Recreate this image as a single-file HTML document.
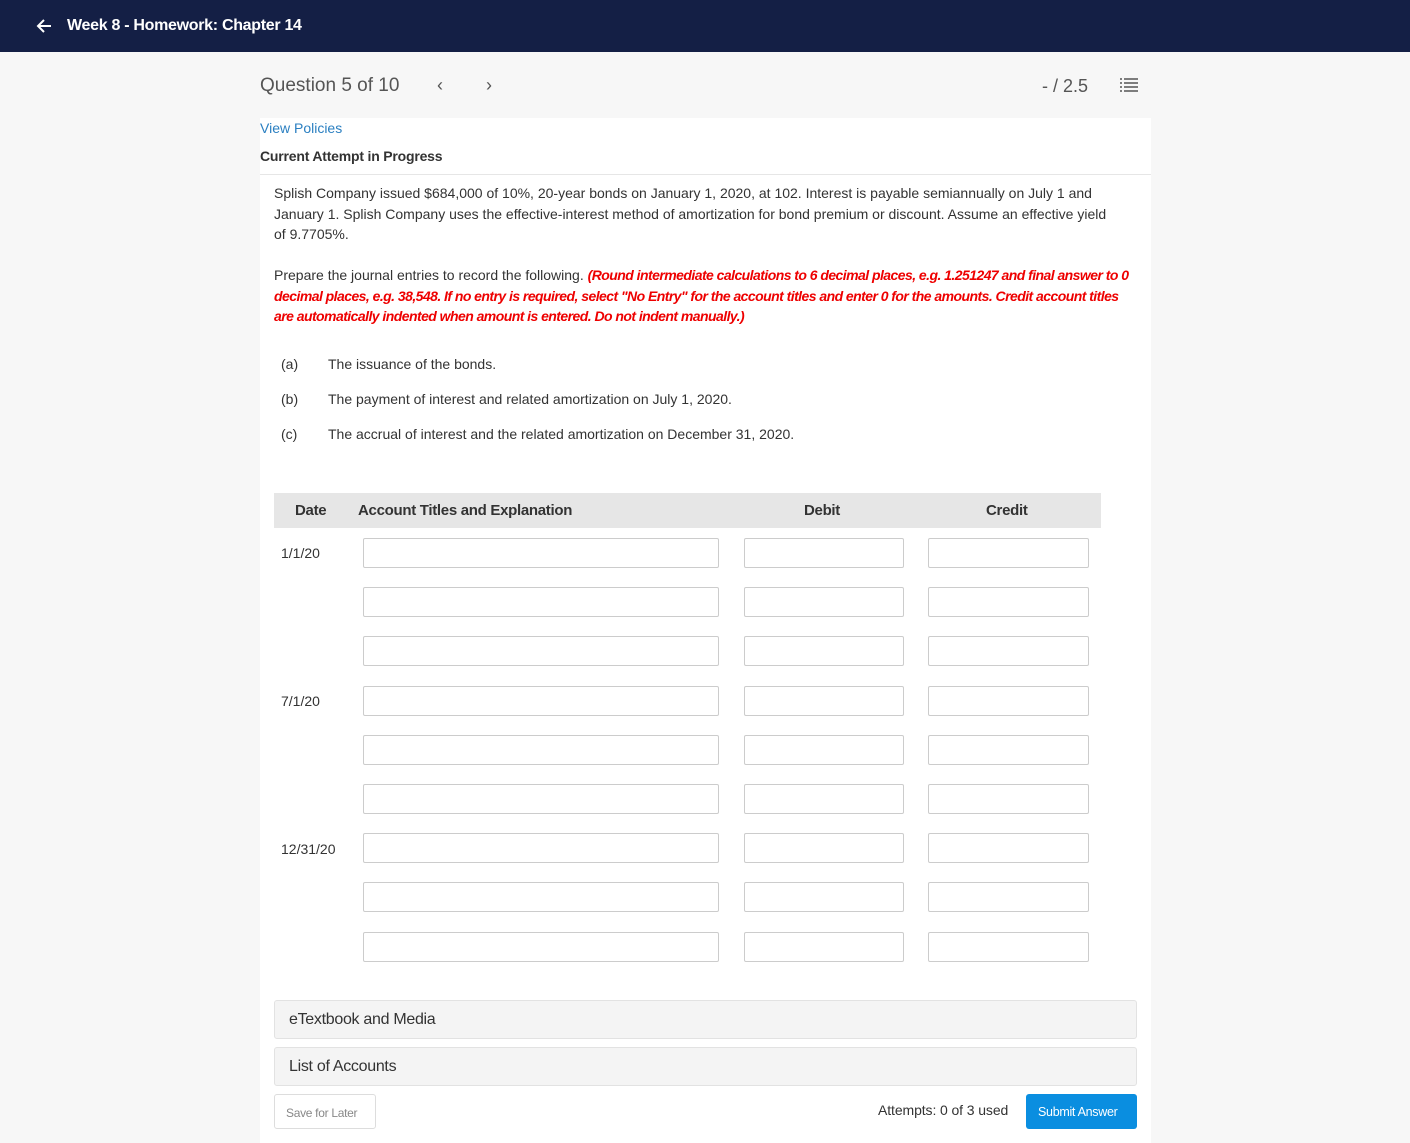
<!DOCTYPE html>
<html><head><meta charset="utf-8"><style>
*{margin:0;padding:0;box-sizing:border-box}
body{width:1410px;height:1143px;background:#f7f7f7;font-family:"Liberation Sans",sans-serif;color:#333;position:relative;overflow:hidden}
.a{position:absolute}
.hdr{left:0;top:0;width:1410px;height:52px;background:#141f45;color:#fff}
.card{left:260px;top:118px;width:891px;height:1025px;background:#fff}
.p{font-size:14px;line-height:20.5px;letter-spacing:0;color:#333}
.red{color:#e00;font-style:italic;font-weight:bold;letter-spacing:-0.55px}
.in{position:absolute;height:30px;border:1px solid #ccc;background:#fff;border-radius:2px}
.lbl{font-size:14px;color:#333;letter-spacing:0}
.acc{left:274px;width:863px;height:39px;background:#f4f4f4;border:1px solid #e2e2e2;border-radius:3px;font-size:16px;padding:10px 14px;color:#333;letter-spacing:-0.3px}
</style></head><body>
<div class="a hdr">
<svg class="a" style="left:35px;top:17px" width="18" height="18" viewBox="0 0 18 18"><path d="M16 9H3M9 3L3 9l6 6" stroke="#fff" stroke-width="2" fill="none"/></svg>
<div class="a" style="left:67px;top:17px;font-size:16px;font-weight:bold;letter-spacing:-0.3px">Week 8 - Homework: Chapter 14</div>
</div>
<div class="a" style="left:260px;top:75px;font-size:19px;color:#555">Question 5 of 10</div>
<div class="a" style="left:437px;top:75px;font-size:18px;color:#555">&#8249;</div>
<div class="a" style="left:486px;top:75px;font-size:18px;color:#555">&#8250;</div>
<div class="a" style="left:1042px;top:76px;font-size:18px;color:#555">- / 2.5</div>
<svg class="a" style="left:1119px;top:77px" width="20" height="16" viewBox="0 0 20 16"><g stroke="#555" stroke-width="1.5"><path d="M5 2h14M5 6h14M5 10h14M5 14h14M1 2h2M1 6h2M1 10h2M1 14h2"/></g></svg>
<div class="a card"></div>
<div class="a" style="left:260px;top:120px;font-size:14px;color:#2a7fc1">View Policies</div>
<div class="a" style="left:260px;top:148px;font-size:14px;font-weight:bold;color:#333;letter-spacing:-0.2px">Current Attempt in Progress</div>
<div class="a" style="left:260px;top:174px;width:891px;height:1px;background:#e6e6e6"></div>
<div class="a p" style="left:274px;top:183px;width:838px">Splish Company issued $684,000 of 10%, 20-year bonds on January 1, 2020, at 102. Interest is payable semiannually on July 1 and January 1. Splish Company uses the effective-interest method of amortization for bond premium or discount. Assume an effective yield of 9.7705%.</div>
<div class="a p" style="left:274px;top:265px;width:860px">Prepare the journal entries to record the following. <span class="red">(Round intermediate calculations to 6 decimal places, e.g. 1.251247 and final answer to 0 decimal places, e.g. 38,548. If no entry is required, select "No Entry" for the account titles and enter 0 for the amounts. Credit account titles are automatically indented when amount is entered. Do not indent manually.)</span></div>
<div class="a lbl" style="left:281px;top:356px">(a)</div><div class="a lbl" style="left:328px;top:356px">The issuance of the bonds.</div>
<div class="a lbl" style="left:281px;top:391px">(b)</div><div class="a lbl" style="left:328px;top:391px">The payment of interest and related amortization on July 1, 2020.</div>
<div class="a lbl" style="left:281px;top:426px">(c)</div><div class="a lbl" style="left:328px;top:426px">The accrual of interest and the related amortization on December 31, 2020.</div>
<div class="a" style="left:274px;top:493px;width:827px;height:35px;background:#e6e6e6"></div>
<div class="a" style="left:295px;top:502px;font-size:15px;font-weight:bold;letter-spacing:-0.3px">Date</div>
<div class="a" style="left:358px;top:502px;font-size:15px;font-weight:bold;letter-spacing:-0.3px">Account Titles and Explanation</div>
<div class="a" style="left:804px;top:502px;font-size:15px;font-weight:bold;letter-spacing:-0.3px">Debit</div>
<div class="a" style="left:986px;top:502px;font-size:15px;font-weight:bold;letter-spacing:-0.3px">Credit</div>
<div class="a lbl" style="left:281px;top:545px">1/1/20</div>
<div class="a lbl" style="left:281px;top:693px">7/1/20</div>
<div class="a lbl" style="left:281px;top:841px">12/31/20</div>
<div class="in" style="left:363px;top:538px;width:356px"></div><div class="in" style="left:744px;top:538px;width:160px"></div><div class="in" style="left:928px;top:538px;width:161px"></div>
<div class="in" style="left:363px;top:587px;width:356px"></div><div class="in" style="left:744px;top:587px;width:160px"></div><div class="in" style="left:928px;top:587px;width:161px"></div>
<div class="in" style="left:363px;top:636px;width:356px"></div><div class="in" style="left:744px;top:636px;width:160px"></div><div class="in" style="left:928px;top:636px;width:161px"></div>
<div class="in" style="left:363px;top:686px;width:356px"></div><div class="in" style="left:744px;top:686px;width:160px"></div><div class="in" style="left:928px;top:686px;width:161px"></div>
<div class="in" style="left:363px;top:735px;width:356px"></div><div class="in" style="left:744px;top:735px;width:160px"></div><div class="in" style="left:928px;top:735px;width:161px"></div>
<div class="in" style="left:363px;top:784px;width:356px"></div><div class="in" style="left:744px;top:784px;width:160px"></div><div class="in" style="left:928px;top:784px;width:161px"></div>
<div class="in" style="left:363px;top:833px;width:356px"></div><div class="in" style="left:744px;top:833px;width:160px"></div><div class="in" style="left:928px;top:833px;width:161px"></div>
<div class="in" style="left:363px;top:882px;width:356px"></div><div class="in" style="left:744px;top:882px;width:160px"></div><div class="in" style="left:928px;top:882px;width:161px"></div>
<div class="in" style="left:363px;top:932px;width:356px"></div><div class="in" style="left:744px;top:932px;width:160px"></div><div class="in" style="left:928px;top:932px;width:161px"></div>
<div class="a acc" style="top:1000px">eTextbook and Media</div>
<div class="a acc" style="top:1047px">List of Accounts</div>
<div class="a" style="left:274px;top:1094px;width:102px;height:35px;border:1px solid #ddd;border-radius:3px;font-size:12px;color:#888;padding:11px 0 0 11px;letter-spacing:-0.3px">Save for Later</div>
<div class="a" style="left:878px;top:1102px;font-size:14px;color:#333;letter-spacing:-0.1px">Attempts: 0 of 3 used</div>
<div class="a" style="left:1026px;top:1094px;width:111px;height:35px;background:#0a8ee0;border-radius:3px;font-size:12.5px;color:#fff;padding:11px 0 0 12px;letter-spacing:-0.3px">Submit Answer</div>
</body></html>
